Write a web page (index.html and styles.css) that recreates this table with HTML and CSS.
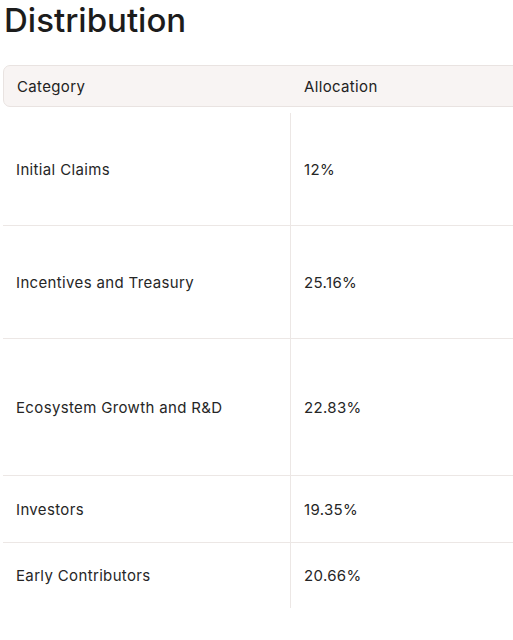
FILE: index.html
```html
<!DOCTYPE html>
<html lang="en">
<head>
    <meta charset="UTF-8">
    <meta name="viewport" content="width=device-width, initial-scale=1.0">
    <title>Distribution</title>
    <link rel="stylesheet" href="styles.css">
</head>
<body>
    <h1 class="title">Distribution</h1>

    <div class="table-wrap">
        <div class="table">
            <div class="table-head">
                <div class="cell">Category</div>
                <div class="cell">Allocation</div>
            </div>

            <div class="table-body">
                <div class="row row-tall">
                    <div class="cell">Initial Claims</div>
                    <div class="cell">12%</div>
                </div>
                <div class="row row-tall">
                    <div class="cell">Incentives and Treasury</div>
                    <div class="cell">25.16%</div>
                </div>
                <div class="row row-xtall">
                    <div class="cell">Ecosystem Growth and R&amp;D</div>
                    <div class="cell">22.83%</div>
                </div>
                <div class="row row-short">
                    <div class="cell">Investors</div>
                    <div class="cell">19.35%</div>
                </div>
                <div class="row row-last">
                    <div class="cell">Early Contributors</div>
                    <div class="cell">20.66%</div>
                </div>
            </div>
        </div>
    </div>
</body>
</html>
```

FILE: styles.css
```css
html, body {
    overflow: hidden;
}

body {
    font-family: Inter, 'Noto Sans', sans-serif;
    color: #1f1f1f;
    margin: 0;
    padding: 0 0 0 3px;
    background: #ffffff;
}

.title {
    font-size: 33px;
    font-weight: 500;
    line-height: 40px;
    margin: 0 0 25px 1px;
    letter-spacing: 0;
    color: #1c1c1c;
}

.table-wrap {
    width: 510px;
    overflow: hidden;
}

.table {
    width: 580px;
    font-size: 15px;
    letter-spacing: 0.35px;
}

.table-head {
    display: grid;
    grid-template-columns: 287px 1fr;
    height: 42px;
    align-items: center;
    background: #f8f4f3;
    border: 1px solid #e9e3e1;
    border-radius: 7px;
    box-sizing: border-box;
    color: #222;
}

.table-head .cell {
    padding-left: 13px;
}

.table-body {
    margin-top: 6px;
}

.row {
    display: grid;
    grid-template-columns: 287px 1fr;
    border-bottom: 1px solid #ece7e5;
    box-sizing: border-box;
    color: #262626;
}

.row .cell {
    display: flex;
    align-items: center;
    padding-left: 13px;
}

.row .cell + .cell {
    border-left: 1px solid #ece7e5;
}

.row-tall {
    height: 113px;
}

.row-xtall {
    height: 137px;
}

.row-short {
    height: 67px;
}

.row-last {
    height: 65px;
    border-bottom: none;
}
```
